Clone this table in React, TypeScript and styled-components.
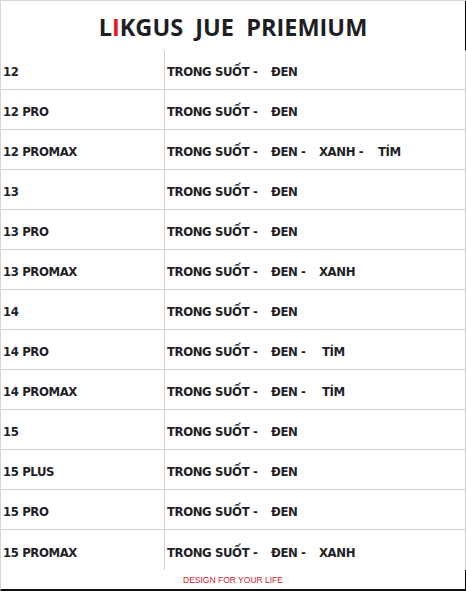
import React from "react";
import styled, { createGlobalStyle } from "styled-components";

const Global = createGlobalStyle`
  html, body { margin: 0; padding: 0; background: #fff; }
  * { box-sizing: border-box; }
`;

const Page = styled.div`
  width: 466px;
  height: 591px;
  display: flex;
  flex-direction: column;
  border-top: 1px solid #d6d6d6;
  border-left: 1px solid #d6d6d6;
  border-bottom: 2px solid #111;
  background: #fff;
`;

const Header = styled.div`
  height: 49px;
  display: flex;
  align-items: center;
  justify-content: center;
  border-right: 1px solid #000;
  padding-top: 2px;
`;

const Title = styled.h1`
  margin: 0;
  font-family: "Open Sans", "Liberation Sans", sans-serif;
  font-weight: 700;
  font-size: 23.5px;
  color: #1e1e24;
  white-space: pre;
`;

const Red = styled.span`
  color: #e0192a;
`;

const Table = styled.div`
  display: flex;
  flex-direction: column;
  border-right: 1px solid #d0d0d0;
`;

const Row = styled.div<{ $last?: boolean }>`
  display: grid;
  grid-template-columns: 164px 1fr;
  height: 40px;
  border-bottom: ${(p) => (p.$last ? "none" : "1px solid #d0d0d0")};
`;

const Cell = styled.div<{ $divider?: boolean }>`
  display: flex;
  align-items: center;
  padding: 4px 0 0 2px;
  font-family: "DejaVu Sans Condensed", "DejaVu Sans", sans-serif;
  font-weight: 700;
  font-size: 13px;
  letter-spacing: -0.4px;
  color: #222226;
  white-space: pre;
  border-right: ${(p) => (p.$divider ? "1px solid #d0d0d0" : "none")};
`;

const Seg = styled.span<{ $w?: number }>`
  display: inline-block;
  width: ${(p) => (p.$w ? `${p.$w}px` : "auto")};
`;

const Footer = styled.div`
  flex: 1;
  display: flex;
  align-items: center;
  justify-content: center;
  border-right: 1px solid #000;
  font-family: "Liberation Sans", Arial, sans-serif;
  font-size: 8.5px;
  color: #d0202e;
`;

type SegT = { t: string; w?: number };

const TS: SegT = { t: "TRONG SUỐT -", w: 104 };
const DEN: SegT = { t: "ĐEN -", w: 48 };
const DEN2: SegT = { t: "ĐEN -", w: 51 };
const DENE: SegT = { t: "ĐEN" };
const XANH: SegT = { t: "XANH -", w: 59 };
const XANHE: SegT = { t: "XANH" };
const TIM: SegT = { t: "TÍM" };

const rows: { model: string; colors: SegT[] }[] = [
  { model: "12", colors: [TS, DENE] },
  { model: "12 PRO", colors: [TS, DENE] },
  { model: "12 PROMAX", colors: [TS, DEN, XANH, TIM] },
  { model: "13", colors: [TS, DENE] },
  { model: "13 PRO", colors: [TS, DENE] },
  { model: "13 PROMAX", colors: [TS, DEN, XANHE] },
  { model: "14", colors: [TS, DENE] },
  { model: "14 PRO", colors: [TS, DEN2, TIM] },
  { model: "14 PROMAX", colors: [TS, DEN2, TIM] },
  { model: "15", colors: [TS, DENE] },
  { model: "15 PLUS", colors: [TS, DENE] },
  { model: "15 PRO", colors: [TS, DENE] },
  { model: "15 PROMAX", colors: [TS, DEN, XANHE] },
];

export default function App() {
  return (
    <>
      <Global />
      <Page>
        <Header>
          <Title>
            L<Red>I</Red>KGUS  JUE  PRIEMIUM
          </Title>
        </Header>
        <Table>
          {rows.map((r, i) => (
            <Row key={r.model} $last={i === rows.length - 1}>
              <Cell $divider>{r.model}</Cell>
              <Cell>
                {r.colors.map((c, j) => (
                  <Seg key={j} $w={c.w}>
                    {c.t}
                  </Seg>
                ))}
              </Cell>
            </Row>
          ))}
        </Table>
        <Footer>DESIGN FOR YOUR LIFE</Footer>
      </Page>
    </>
  );
}
